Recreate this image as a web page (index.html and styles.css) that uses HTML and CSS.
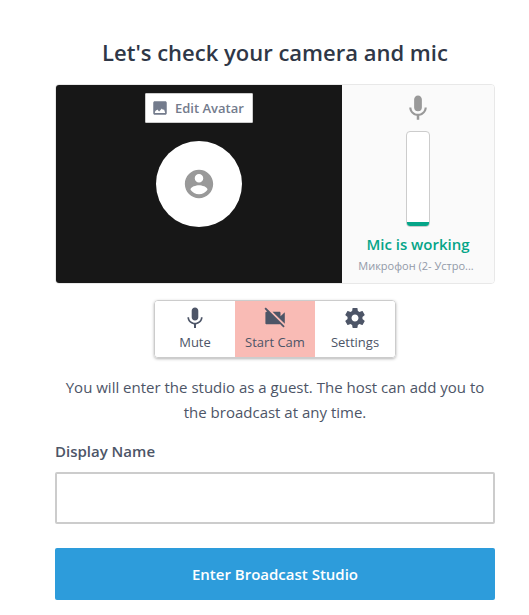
FILE: index.html
```html
<!DOCTYPE html>
<html lang="en">
<head>
<meta charset="utf-8">
<title>Check your camera and mic</title>
<link rel="stylesheet" href="styles.css">
</head>
<body>
<main class="page">
  <h1>Let's check your camera and mic</h1>
  <section class="preview">
    <div class="camera">
      <button class="edit"><svg width="18" height="18" viewBox="0 0 24 24"><path d="M21 19V5c0-1.100-.9-2-2-2H5c-1.100 0-2 .9-2 2v14c0 1.100.9 2 2 2h14c1.100 0 2-.9 2-2zM8.500 14l2.300 2.500L14.500 12.500l1.600 2 1.200-.9L19 18.500H5l.8-2.500z"/></svg>Edit Avatar</button>
      <div class="avatar"><svg width="34" height="34" viewBox="0 0 24 24"><path d="M12 2C6.480 2 2 6.480 2 12s4.480 10 10 10 10-4.480 10-10S17.520 2 12 2zm0 3c1.660 0 3 1.340 3 3s-1.340 3-3 3-3-1.340-3-3 1.340-3 3-3zm0 14.200c-2.500 0-4.710-1.280-6-3.220.03-1.990 4-3.080 6-3.080 1.990 0 5.970 1.090 6 3.080-1.290 1.940-3.500 3.220-6 3.220z"/></svg></div>
    </div>
    <div class="mic">
      <svg width="30" height="30" viewBox="0 0 24 24"><path d="M12 14.500c2 0 3.100-1.340 3.100-3V5.200c0-1.800-1.340-3.200-3.100-3.200S8.900 3.400 8.900 5.200v6.300c0 1.660 1.100 3 3.100 3zm5.300-3c0 3-2.540 5.100-5.300 5.100s-5.300-2.100-5.300-5.100H5c0 3.410 2.720 6.230 6 6.720V21.300h2v-3.080c3.280-.49 6-3.310 6-6.720h-1.700z"/></svg>
      <div class="meter"><div class="level"></div></div>
      <div class="status">Mic is working</div>
      <div class="device">Микрофон (2- Устро...</div>
    </div>
  </section>
  <div class="controls">
    <button class="control"><svg width="24" height="24" viewBox="0 0 24 24"><path d="M12 14.400c2 0 3.300-1.340 3.300-3.200V4.700c0-1.900-1.400-3.300-3.300-3.300S8.700 2.800 8.700 4.700v6.500c0 1.860 1.300 3.200 3.300 3.200zm5.900-3.200c0 3.200-2.800 5.500-5.900 5.500s-5.900-2.300-5.900-5.500H4.400c0 3.600 2.900 6.600 6.600 7.200V22h2v-3.600c3.700-.6 6.600-3.600 6.600-7.200h-1.700z"/></svg>Mute</button>
    <button class="control off"><svg width="24" height="24" viewBox="0 0 24 24"><path d="M21.800 6.200l-4.300 4.100V6.800c0-.6-.5-1.100-1.100-1.100H9.500L21.800 17.800V6.200zM2.800 1.500L1.500 2.800 4.300 5.700h-.8c-.6 0-1.100.5-1.100 1.100v10.400c0 .6.5 1.100 1.100 1.100h12.900c.2 0 .4-.1.600-.2l3.400 3.400 1.300-1.300L2.800 1.500z"/></svg>Start Cam</button>
    <button class="control"><svg width="24" height="24" viewBox="0 0 24 24"><path d="M19.430 12.980c.04-.32.07-.64.07-.98s-.03-.66-.07-.98l2.110-1.650c.19-.15.24-.42.12-.64l-2-3.460c-.12-.22-.39-.3-.61-.22l-2.490 1c-.52-.4-1.080-.73-1.690-.98l-.38-2.650C14.460 2.180 14.250 2 14 2h-4c-.25 0-.46.18-.49.42l-.38 2.650c-.61.25-1.170.59-1.690.98l-2.490-1c-.23-.09-.49 0-.61.22l-2 3.460c-.13.22-.07.49.12.64l2.110 1.650c-.04.32-.07.65-.07.98s.03.66.07.98l-2.110 1.650c-.19.15-.24.42-.12.64l2 3.460c.12.22.39.3.61.22l2.490-1c.52.4 1.080.73 1.690.98l.38 2.650c.03.24.24.42.49.42h4c.25 0 .46-.18.49-.42l.38-2.650c.61-.25 1.170-.59 1.690-.98l2.490 1c.23.09.49 0 .61-.22l2-3.460c.12-.22.07-.49-.12-.64l-2.110-1.650zM12 15.500c-1.930 0-3.500-1.570-3.500-3.500s1.570-3.500 3.500-3.500 3.500 1.570 3.500 3.500-1.570 3.500-3.500 3.500z"/></svg>Settings</button>
  </div>
  <p class="note">You will enter the studio as a guest. The host can add you to the broadcast at any time.</p>
  <label for="name">Display Name</label>
  <input id="name" type="text">
  <button class="enter">Enter Broadcast Studio</button>
</main>
</body>
</html>
```
FILE: styles.css
```css
* { box-sizing: border-box; }
body { margin: 0; background: #fff; color: #4d5567; font-family: "Open Sans", sans-serif; }
button { font-family: inherit; color: inherit; margin: 0; }
svg { display: block; fill: currentColor; flex-shrink: 0; }
.page { width: 440px; margin-left: 55px; padding-top: 35px; display: flex; flex-direction: column; }
h1 { margin: 0 0 15px; font-size: 22px; line-height: 34px; font-weight: 600; text-align: center; color: #2f3747; }
.preview { height: 200px; display: flex; border: 1px solid #e8e8e8; border-radius: 4px; overflow: hidden; }
.camera { width: 286px; background: #171717; display: flex; flex-direction: column; align-items: center; padding-top: 8px; }
.edit { width: 108px; height: 30px; padding: 0 0 0 5px; border: 1px solid #ccc; border-radius: 1px; background: #fff; display: flex; align-items: center; gap: 6px; font-size: 13px; font-weight: 600; color: #737b8c; white-space: nowrap; }
.avatar { width: 86px; height: 86px; margin-top: 18px; border-radius: 50%; background: #fff; color: #999; display: flex; align-items: center; justify-content: center; }
.mic { flex: 1; background: #fafafa; color: #999; display: flex; flex-direction: column; align-items: center; padding-top: 8px; }
.meter { width: 24px; height: 96px; margin-top: 8px; border: 1px solid #ccc; border-radius: 4px; background: #fff; overflow: hidden; display: flex; align-items: flex-end; }
.level { width: 100%; height: 4px; background: #05a588; }
.status { margin-top: 6px; font-size: 15px; line-height: 22px; font-weight: 600; color: #05a588; }
.device { margin-top: 2px; padding-right: 4px; font-size: 11px; line-height: 18px; color: #9299a8; white-space: nowrap; }
.controls { width: 242px; height: 58px; margin: 16px 0 0 99px; display: flex; border: 1px solid #ccc; border-radius: 4px; overflow: hidden; box-shadow: 0 1px 3px rgba(0,0,0,.3); }
.control { width: 80px; padding: 5px 0 0; border: 0; background: #fff; display: flex; flex-direction: column; align-items: center; justify-content: flex-start; font-size: 13px; line-height: 24px; }
.off { background: #f9bbb5; }
.note { margin: 17px 0 0; font-size: 15px; line-height: 25px; text-align: center; }
label { margin-top: 14px; font-size: 15px; line-height: 25px; font-weight: 600; }
input { height: 52px; margin: 8px 0 24px; border: 2px solid #ccc; border-radius: 2px; background: #fff; padding: 0 12px; font: 15px "Open Sans", sans-serif; }
.enter { height: 52px; padding: 0; border: 0; border-radius: 2px; background: #2d9cdb; color: #fff; font-size: 15px; font-weight: 600; }
```
